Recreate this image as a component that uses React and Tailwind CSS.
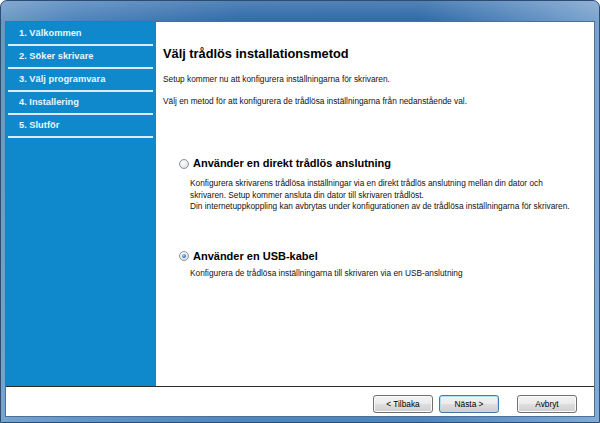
import React from "react";

const steps = ["1. Välkommen", "2. Söker skrivare", "3. Välj programvara", "4. Installering", "5. Slutför"];

function Radio({ checked }) {
  return (
    <span className="relative inline-block w-[10px] h-[10px] rounded-full border border-[#8f9296] bg-[radial-gradient(circle_at_40%_35%,#ffffff_0%,#e9eaeb_55%,#c9cbcd_100%)] shrink-0">
      {checked && (
        <span className="absolute left-[2px] top-[2px] w-[4px] h-[4px] rounded-full bg-[radial-gradient(circle_at_40%_35%,#a9d6f6_0%,#2f79bd_60%,#1a4f86_100%)]" />
      )}
    </span>
  );
}

function Btn({ children, def }) {
  return (
    <div
      className={
        "w-[60px] h-[18px] rounded-[3px] flex items-center justify-center text-[8.3px] text-black bg-[linear-gradient(#f3f3f3_0%,#ebebeb_48%,#dddddd_52%,#cfcfcf_100%)] border " +
        (def ? "border-[#3d7bad] shadow-[inset_0_0_0_1px_#b4def6]" : "border-[#707070] shadow-[inset_0_0_0_1px_#fbfbfb]")
      }
    >
      {children}
    </div>
  );
}

export default function App() {
  return (
    <div
      className="w-[600px] h-[423px] flex flex-col rounded-t-[7px] border border-[#2c4c73] overflow-hidden bg-[linear-gradient(90deg,#6a97c6_0%,#4d82bb_12%,#2d69a8_40%,#2b67a6_70%,#5e8ec2_90%,#7aa2cd_100%)]"
      style={{ fontFamily: '"Liberation Sans", Arial, sans-serif' }}
    >
      <div className="h-[20px] shrink-0 bg-[linear-gradient(180deg,rgba(255,255,255,0.18),rgba(255,255,255,0.02))]" />
      <div className="flex-1 flex flex-col px-[4px] pb-[5px] bg-[linear-gradient(180deg,rgba(255,255,255,0)_0%,rgba(140,190,230,0.35)_100%)]">
        <div className="flex-1 flex flex-col bg-white border border-[#4e6f95]">
          <div className="flex flex-1 min-h-0">
            <div className="w-[150px] shrink-0 bg-[#0f89cc] pt-[1px] flex flex-col">
              {steps.map((s) => (
                <div key={s}>
                  <div className="h-[21px] flex items-center pl-[13px] text-[9.3px] font-bold text-[#eaf5fc]">{s}</div>
                  <div className="h-[2px] ml-[2px] mr-[3px] bg-[#dcecf7]" />
                </div>
              ))}
            </div>
            <div className="flex-1 pl-[7px] pt-[24px] text-[#111]">
              <div className="text-[12.8px] leading-[15px] font-bold text-black">Välj trådlös installationsmetod</div>
              <div className="mt-[13px] text-[8.3px] leading-[11px]">Setup kommer nu att konfigurera inställningarna för skrivaren.</div>
              <div className="mt-[11px] text-[8.3px] leading-[11px]">Välj en metod för att konfigurera de trådlösa inställningarna från nedanstående val.</div>

              <div className="mt-[50px] ml-[16px] flex items-center gap-[4px]">
                <Radio />
                <span className="text-[11px] leading-[13px] font-bold text-black">Använder en direkt trådlös anslutning</span>
              </div>
              <div className="mt-[8px] ml-[27px] text-[8.3px] leading-[11.5px] whitespace-nowrap">
                Konfigurera skrivarens trådlösa inställningar via en direkt trådlös anslutning mellan din dator och
                <br />
                skrivaren. Setup kommer ansluta din dator till skrivaren trådlöst.
                <br />
                Din internetuppkoppling kan avbrytas under konfigurationen av de trådlösa inställningarna för skrivaren.
              </div>

              <div className="mt-[37px] ml-[16px] flex items-center gap-[4px]">
                <Radio checked />
                <span className="text-[11px] leading-[13px] font-bold text-black">Använder en USB-kabel</span>
              </div>
              <div className="mt-[5px] ml-[27px] text-[8.3px] leading-[11px]">
                Konfigurera de trådlösa inställningarna till skrivaren via en USB-anslutning
              </div>
            </div>
          </div>
          <div className="h-px bg-[#2b2b2b]" />
          <div className="h-[29px] shrink-0 flex items-start justify-end pt-[8px] pr-[17px]">
            <Btn>&lt; Tilbaka</Btn>
            <div className="w-[6px]" />
            <Btn def>Nästa &gt;</Btn>
            <div className="w-[18px]" />
            <Btn>Avbryt</Btn>
          </div>
        </div>
      </div>
    </div>
  );
}
